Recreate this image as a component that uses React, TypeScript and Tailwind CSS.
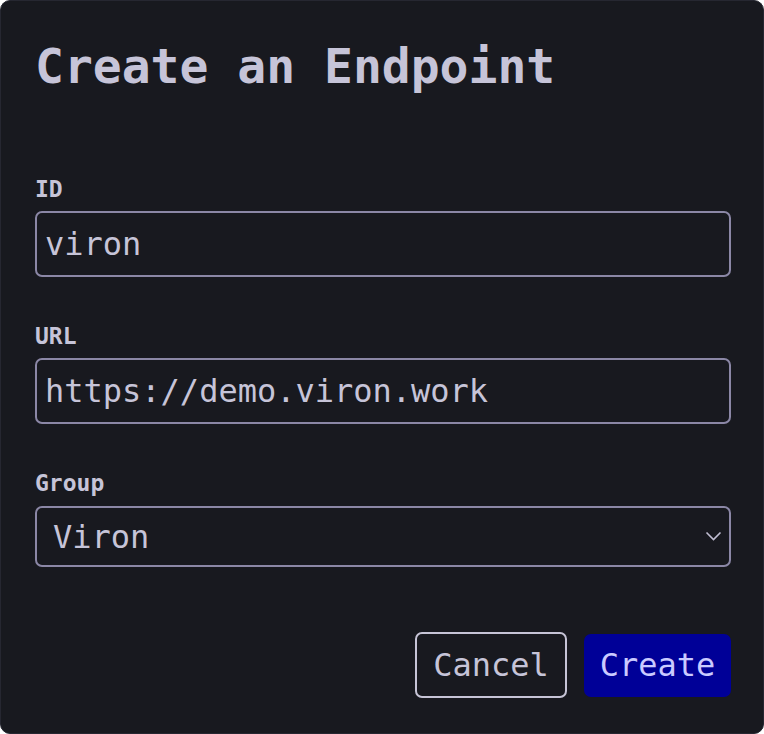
const fieldLabel = "block text-[23px] leading-[23px] font-bold text-[#c6c4d8]";
const fieldInput =
    "block w-full h-[66px] mt-[10px] px-[8px] rounded-[7px] border-2 border-[#8b87a6] bg-transparent text-[32px] text-[#c6c4d8] outline-none";

const App = () => {
    return (
        <div
            className="w-[764px] h-[734px] bg-[#18191f] border border-[#262731] rounded-[10px] pl-[34px] pr-[32px] pt-[41px]"
            style={{ fontFamily: '"DejaVu Sans Mono", monospace' }}
        >
            <h1 className="text-[48px] leading-[48px] font-bold text-[#c6c4d8]">Create an Endpoint</h1>

            <div className="mt-[88px]">
                <label className={fieldLabel}>ID</label>
                <input className={fieldInput} defaultValue="viron" />
            </div>

            <div className="mt-[48px]">
                <label className={fieldLabel}>URL</label>
                <input className={fieldInput} defaultValue="https://demo.viron.work" />
            </div>

            <div className="mt-[48px]">
                <label className={fieldLabel}>Group</label>
                <div className="relative mt-[11px]">
                    <select className="block w-full h-[61px] pl-[16px] pr-10 rounded-[7px] border-2 border-[#8b87a6] bg-transparent text-[32px] text-[#c6c4d8] outline-none appearance-none">
                        <option>Viron</option>
                    </select>
                    <svg
                        className="absolute right-[9px] top-[25px] pointer-events-none"
                        width="17"
                        height="10"
                        viewBox="0 0 17 10"
                        fill="none"
                    >
                        <path d="M1.5 1.5l7 7 7-7" stroke="#c0bed2" strokeWidth="1.6" />
                    </svg>
                </div>
            </div>

            <div className="flex justify-end items-center gap-[17px] mt-[65px]">
                <button className="h-[66px] w-[152px] rounded-[7px] border-2 border-[#c6c4d6] text-[32px] text-[#c6c4d8]">
                    Cancel
                </button>
                <button className="h-[63px] w-[147px] rounded-[7px] bg-[#000097] text-[32px] text-[#cacaff]">
                    Create
                </button>
            </div>
        </div>
    );
};

export default App;
